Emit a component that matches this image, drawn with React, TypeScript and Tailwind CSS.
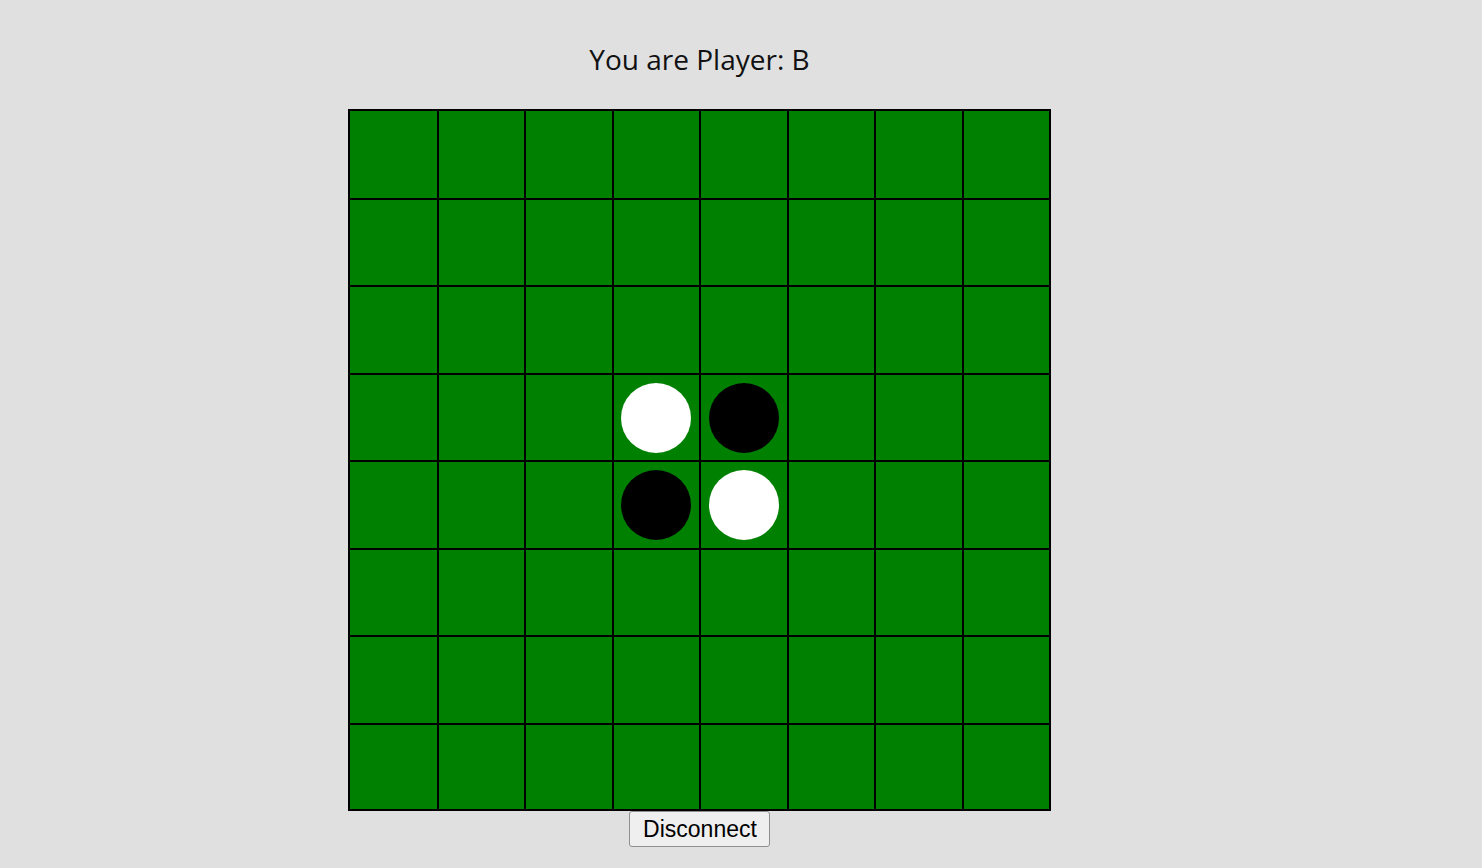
import React from "react";

const colW = ["w-[87px]", "w-[85px]", "w-[86px]", "w-[85px]", "w-[86px]", "w-[85px]", "w-[86px]", "w-[85px]"];
const rowH = ["h-[87px]", "h-[85px]", "h-[86px]", "h-[85px]", "h-[86px]", "h-[85px]", "h-[86px]", "h-[84px]"];

function piece(r: number, c: number): "W" | "B" | null {
  if ((r === 3 && c === 3) || (r === 4 && c === 4)) return "W";
  if ((r === 3 && c === 4) || (r === 4 && c === 3)) return "B";
  return null;
}

export default function App() {
  return (
    <div className="min-h-screen w-full bg-[#e0e0e0]" style={{ minHeight: 868 }}>
      <div className="ml-[348px] flex w-[703px] flex-col items-center pt-[38px]">
        <div className="h-[42px] text-[28px] leading-[42px] text-[#111] font-['Open_Sans',sans-serif]">
          You are Player: B
        </div>
        <div className="mt-[29px] flex flex-col gap-[2px] bg-black p-[2px]">
          {rowH.map((h, r) => (
            <div key={r} className="flex gap-[2px]">
              {colW.map((w, c) => {
                const p = piece(r, c);
                const shift = c === 3 ? "-ml-[1px]" : "";
                return (
                  <div key={c} className={`${w} ${h} flex items-center justify-center bg-[#008000]`}>
                    {p === "W" && <div className={`h-[70px] w-[70px] rounded-full bg-white ${shift}`} />}
                    {p === "B" && <div className={`h-[70px] w-[70px] rounded-full bg-black ${shift}`} />}
                  </div>
                );
              })}
            </div>
          ))}
        </div>
        <button className="h-[36px] rounded-[3px] border border-[#8f8f8f] bg-[#efefef] pl-[13px] pr-[12px] text-[23px] leading-none text-black font-['Liberation_Sans',Arial,sans-serif]">
          Disconnect
        </button>
      </div>
    </div>
  );
}
